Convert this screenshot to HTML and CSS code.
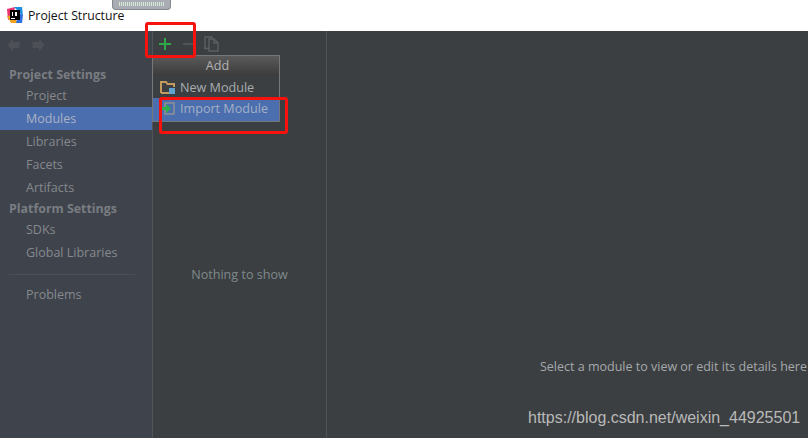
FILE: index.html
```html
<!DOCTYPE html>
<html lang="en">
<head>
<meta charset="utf-8">
<title>Project Structure</title>
<link rel="stylesheet" href="styles.css">
</head>
<body>
<div class="window">
  <header class="titlebar">
    <svg class="app-icon" width="16" height="16" viewBox="0 0 16 16">
      <path d="M0 2 L8 0 L6 10 L1 13Z" fill="#e8336d"/>
      <path d="M7 0 H15 L16 9 L10 3Z" fill="#1d8fe0"/>
      <path d="M0 9 L4 16 H11 L6 8Z" fill="#f4a21f"/>
      <path d="M12 6 L16 8 L15 16 H9Z" fill="#2f6fe0"/>
      <rect x="3" y="3" width="10" height="10" fill="#000"/>
      <rect x="4" y="11" width="4" height="1" fill="#fff"/>
      <rect x="5" y="5" width="1" height="4" fill="#fff"/>
      <rect x="8" y="5" width="2" height="4" fill="#fff"/>
    </svg>
    <span class="title">Project Structure</span>
    <div class="grabber"><div class="grabber-lines"></div></div>
  </header>
  <div class="content">
    <aside class="sidebar">
      <div class="nav-arrows">
        <svg width="13" height="14" viewBox="0 0 13 14"><path d="M6 .5 L.5 7 L6 13.500 V10 H12.500 V4 H6Z" fill="#4d5157"/></svg>
        <svg width="13" height="14" viewBox="0 0 13 14"><path d="M7 .5 L12.500 7 L7 13.500 V10 H.5 V4 H7Z" fill="#4d5157"/></svg>
      </div>
      <div class="group">Project Settings</div>
      <div class="item">Project</div>
      <div class="item selected">Modules</div>
      <div class="item">Libraries</div>
      <div class="item">Facets</div>
      <div class="item">Artifacts</div>
      <div class="group group-tight">Platform Settings</div>
      <div class="item">SDKs</div>
      <div class="item">Global Libraries</div>
      <div class="divider"></div>
      <div class="item">Problems</div>
    </aside>
    <section class="modules">
      <div class="toolbar">
        <svg width="14" height="14" viewBox="0 0 14 14"><path d="M6 1 H8 V6 H13 V8 H8 V13 H6 V8 H1 V6 H6Z" fill="#2fa84a"/></svg>
        <svg width="10" height="14" viewBox="0 0 10 14"><rect x="0" y="6" width="10" height="2" fill="#505458"/></svg>
        <svg width="15" height="16" viewBox="0 0 15 16"><path d="M5 12.500 H1 V1 H8 V3 M5 3 H10 L14 7 V15 H5Z M10 3 V7 H14" fill="none" stroke="#5b5f62" stroke-width="1.400"/></svg>
      </div>
      <div class="empty">Nothing to show</div>
    </section>
    <main class="details">
      <div class="hint">Select a module to view or edit its details here</div>
    </main>
  </div>

  <div class="popup">
    <div class="popup-head">Add</div>
    <div class="popup-row">
      <svg width="16" height="15" viewBox="0 0 16 15"><path d="M1 13 V2 H6 L7.500 4 H14 V7 M1 13 H9" fill="none" stroke="#c29a5c" stroke-width="2"/><rect x="9" y="8" width="6" height="6" fill="#5fa3cf"/></svg>
      <span>New Module</span>
    </div>
    <div class="popup-row active">
      <svg width="16" height="15" viewBox="0 0 16 15"><rect x="5" y="2" width="9" height="11" fill="none" stroke="#8a8f96" stroke-width="1.600"/><path d="M2 6 H6 V3 L11 7.500 L6 12 V9 H2Z" fill="#2fae4e"/></svg>
      <span>Import Module</span>
    </div>
  </div>

  <div class="mark mark-add"></div>
  <div class="mark mark-import"></div>
  <div class="watermark">https://blog.csdn.net/weixin_44925501</div>
</div>
</body>
</html>
```

FILE: styles.css
```css
* { box-sizing: border-box; }
html, body { margin: 0; padding: 0; }
body { background: #3c3f41; }
.window {
  position: relative;
  width: 808px;
  height: 438px;
  overflow: hidden;
  font-family: "Open Sans", "Noto Sans", sans-serif;
  font-size: 13px;
  display: flex;
  flex-direction: column;
}
.titlebar {
  height: 31px;
  flex: none;
  background: #fff;
  display: flex;
  align-items: center;
  padding-left: 7px;
  padding-bottom: 1px;
  gap: 5px;
  position: relative;
  color: #111;
}
.title { font-size: 12.25px; }
.grabber {
  position: absolute;
  left: 112px;
  top: 0;
  width: 59px;
  height: 10px;
  background: #a9acb3;
  border: 1px solid #85888e;
  border-top: 0;
  border-radius: 0 0 4px 4px;
  padding: 2px 6px 0;
}
.grabber-lines {
  height: 4px;
  background: repeating-linear-gradient(90deg, #d8e6d8 0 1px, #a6b2b4 1px 2px);
}
.content { flex: 1; display: flex; min-height: 0; }
.sidebar {
  width: 153px;
  flex: none;
  background: #3f434c;
  border-right: 1px solid #50535a;
  color: #85898d;
}
.nav-arrows {
  height: 33px;
  display: flex;
  align-items: center;
  gap: 12px;
  padding: 0 0 5px 7px;
}
.group {
  height: 20px;
  line-height: 21px;
  padding-left: 9px;
  font-weight: 700;
  font-size: 12.4px;
  color: #797d82;
}
.group-tight { height: 19px; line-height: 19px; }
.item {
  height: 23px;
  line-height: 23px;
  padding-left: 26px;
  font-size: 12.5px;
}
.item.selected { background: #4b6eaf; color: #aab3c2; }
.divider {
  height: 1px;
  margin: 10px 17px 8px 9px;
  background: #4c5056;
}
.modules {
  width: 174px;
  flex: none;
  background: #3c3f41;
  border-right: 1px solid #505356;
  display: flex;
  flex-direction: column;
}
.toolbar {
  height: 25px;
  display: flex;
  align-items: center;
  gap: 11px;
  padding-left: 5px;
}
.empty {
  margin-top: 210px;
  text-align: center;
  color: #7f8a8c;
  font-size: 12.6px;
}
.details {
  flex: 1;
  background: #3c3f41;
  position: relative;
  overflow: hidden;
}
.hint {
  white-space: nowrap;
  margin: 327px 0 0 213px;
  color: #a5a9ac;
  font-size: 12.5px;
  line-height: 18px;
}
.popup {
  position: absolute;
  left: 152px;
  top: 55px;
  width: 128px;
  height: 67px;
  background: #3c3f41;
  border: 1px solid #75787b;
  color: #a9adb0;
  font-size: 12.6px;
}
.popup-head {
  height: 20px;
  line-height: 19px;
  text-align: center;
  padding-left: 3px;
  background: linear-gradient(#5a5a5a, #3b3b3b);
  color: #b4b4b4;
}
.popup-row {
  height: 22px;
  display: flex;
  align-items: center;
  gap: 4px;
  padding-left: 7px;
}
.popup-row.active { background: #4b6eaf; color: #a3afc4; height: 23px; padding-bottom: 2px; }
.mark {
  position: absolute;
  border: 3px solid #f8120e;
  border-radius: 3px;
}
.mark-add { left: 145px; top: 22px; width: 51px; height: 36px; }
.mark-import { left: 159px; top: 97px; width: 129px; height: 37px; }
.watermark {
  position: absolute;
  left: 528px;
  top: 408px;
  font-family: "Liberation Sans", Arial, sans-serif;
  font-size: 16px;
  line-height: 20px;
  color: #b9b9b9;
  white-space: nowrap;
}
```
